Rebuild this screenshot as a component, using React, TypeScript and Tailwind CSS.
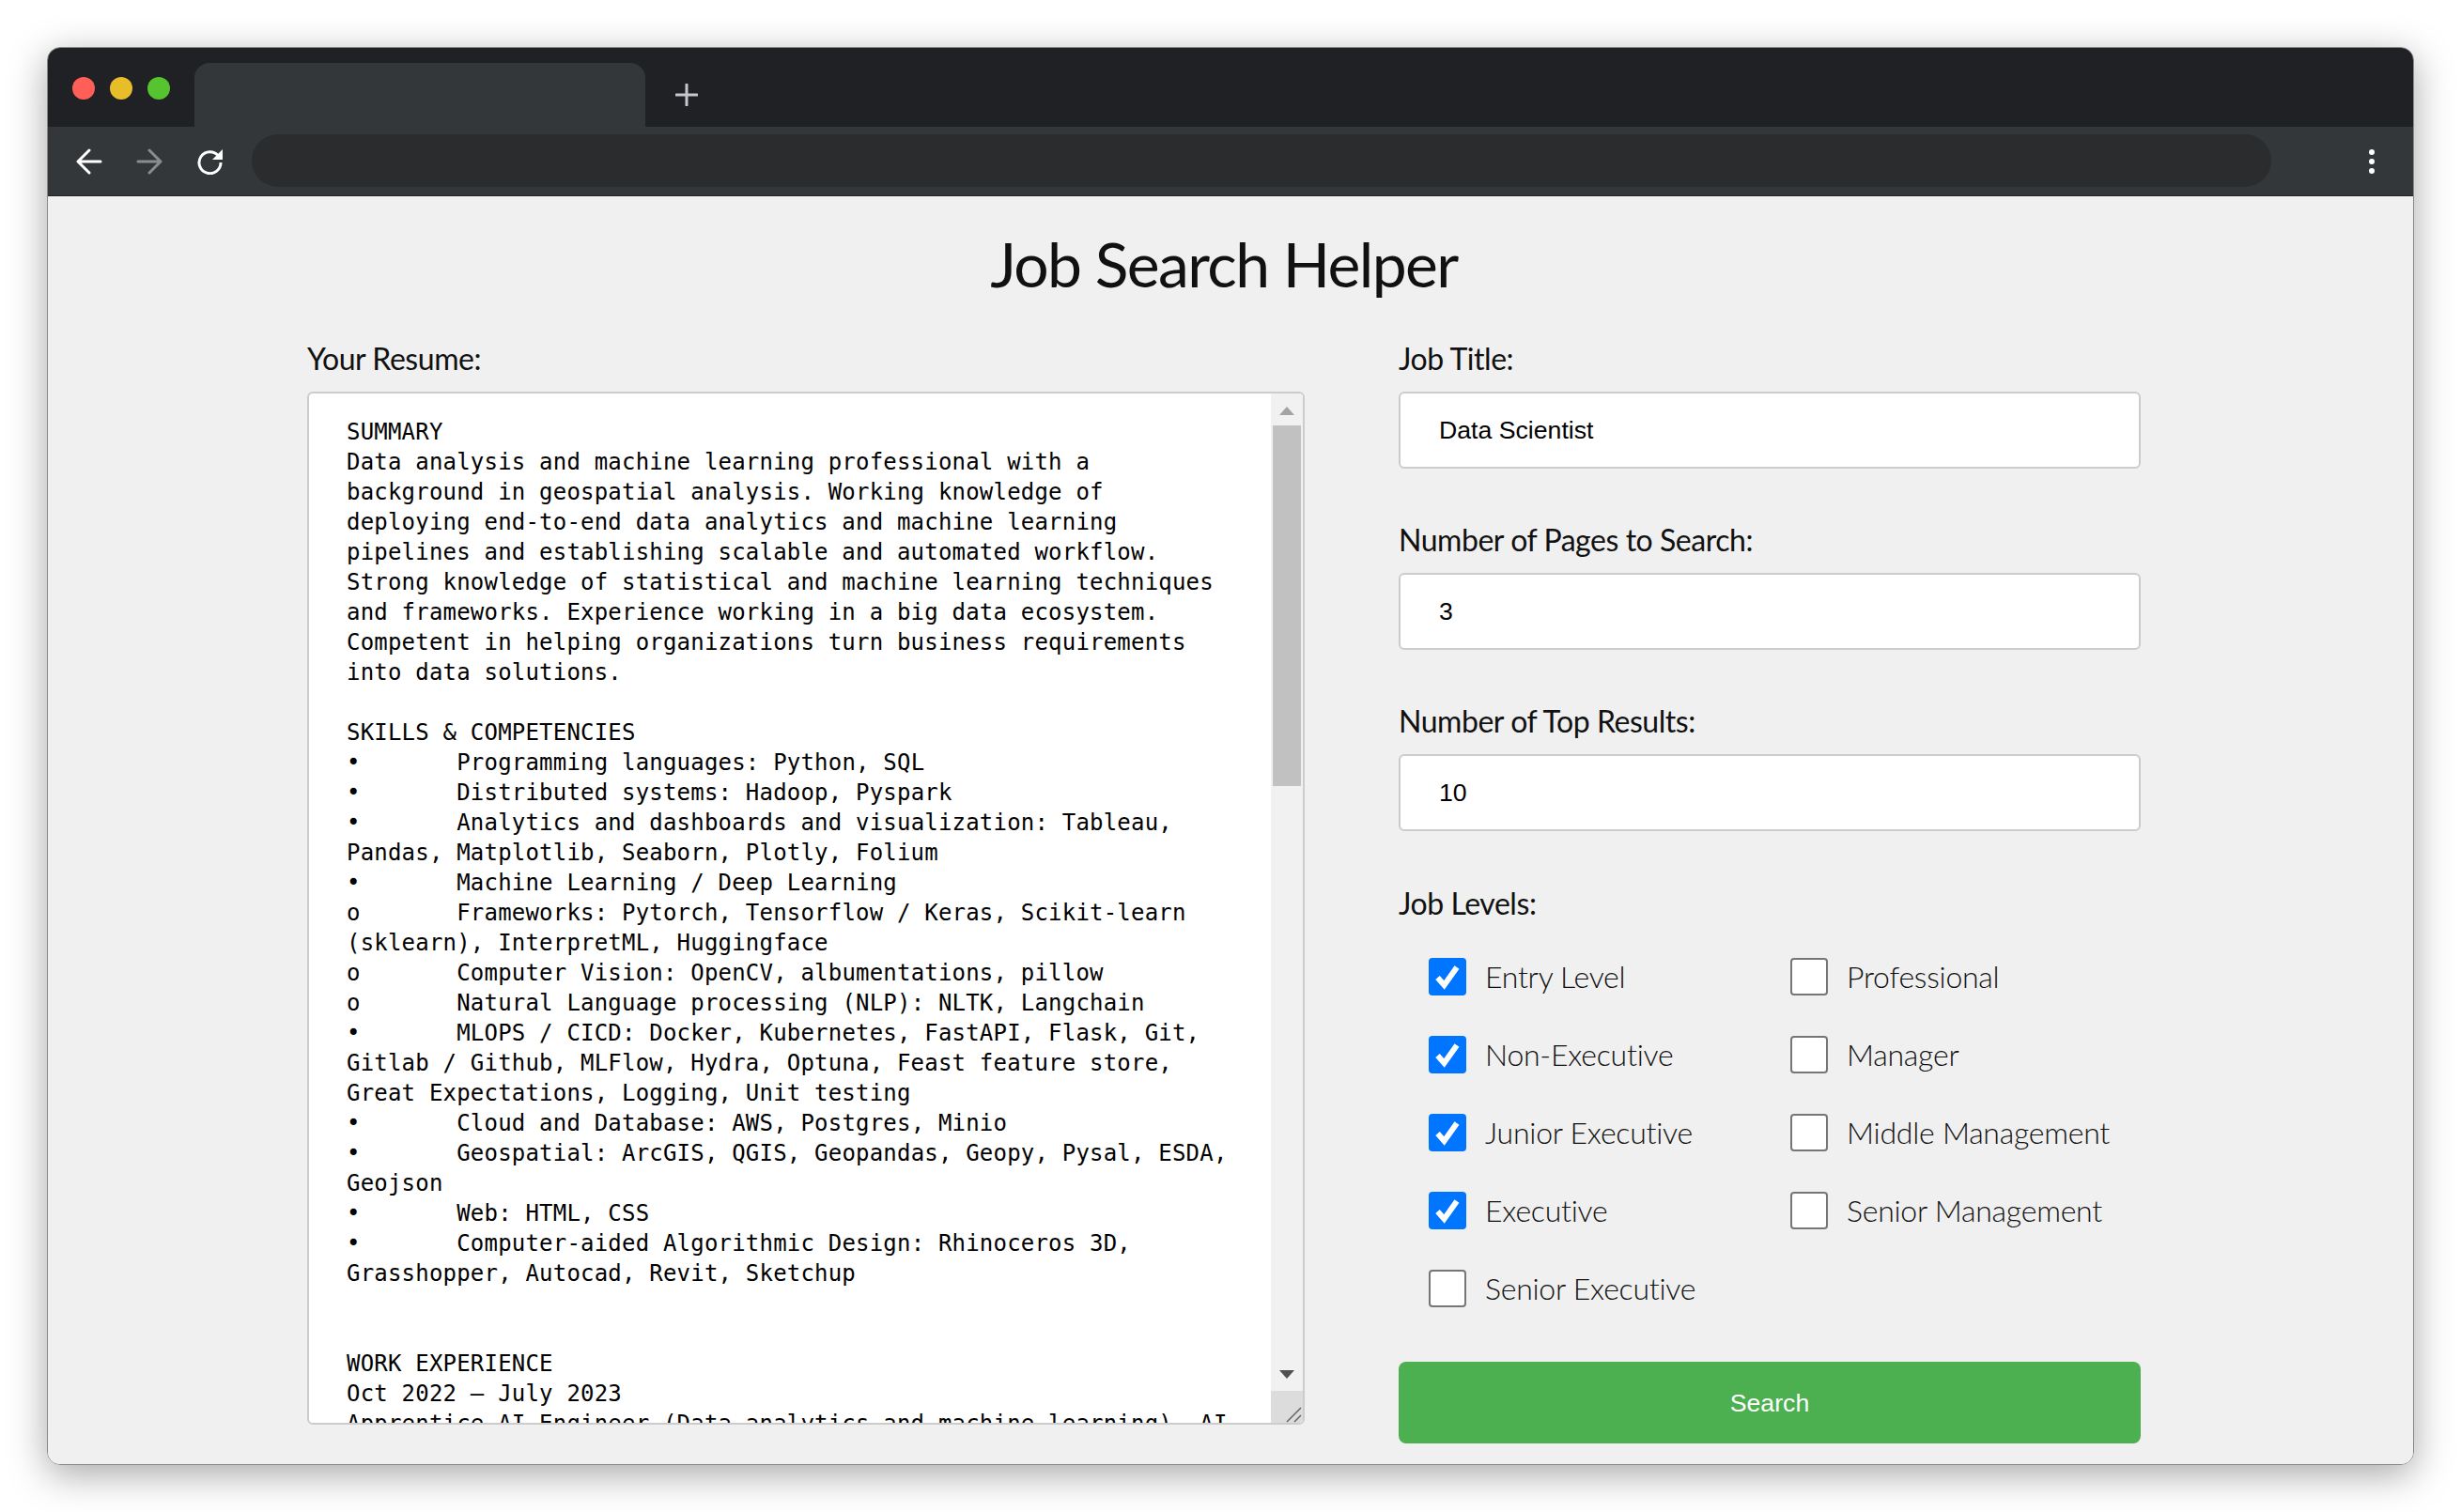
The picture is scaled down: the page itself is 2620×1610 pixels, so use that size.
const resume = `SUMMARY
Data analysis and machine learning professional with a
background in geospatial analysis. Working knowledge of
deploying end-to-end data analytics and machine learning
pipelines and establishing scalable and automated workflow.
Strong knowledge of statistical and machine learning techniques
and frameworks. Experience working in a big data ecosystem.
Competent in helping organizations turn business requirements
into data solutions.

SKILLS & COMPETENCIES
•\tProgramming languages: Python, SQL
•\tDistributed systems: Hadoop, Pyspark
•\tAnalytics and dashboards and visualization: Tableau,
Pandas, Matplotlib, Seaborn, Plotly, Folium
•\tMachine Learning / Deep Learning
o\tFrameworks: Pytorch, Tensorflow / Keras, Scikit-learn
(sklearn), InterpretML, Huggingface
o\tComputer Vision: OpenCV, albumentations, pillow
o\tNatural Language processing (NLP): NLTK, Langchain
•\tMLOPS / CICD: Docker, Kubernetes, FastAPI, Flask, Git,
Gitlab / Github, MLFlow, Hydra, Optuna, Feast feature store,
Great Expectations, Logging, Unit testing
•\tCloud and Database: AWS, Postgres, Minio
•\tGeospatial: ArcGIS, QGIS, Geopandas, Geopy, Pysal, ESDA,
Geojson
•\tWeb: HTML, CSS
•\tComputer-aided Algorithmic Design: Rhinoceros 3D,
Grasshopper, Autocad, Revit, Sketchup


WORK EXPERIENCE
Oct 2022 – July 2023
Apprentice AI Engineer (Data analytics and machine learning), AI`;

const levels: [string, boolean][] = [
  ["Entry Level", true],
  ["Professional", false],
  ["Non-Executive", true],
  ["Manager", false],
  ["Junior Executive", true],
  ["Middle Management", false],
  ["Executive", true],
  ["Senior Management", false],
  ["Senior Executive", false],
];

function Field({ label, value }: { label: string; value: string }) {
  return (
    <div className="flex flex-col">
      <div className="h-[34px] translate-y-[1px] text-[32px] leading-[34px] tracking-[-0.45px] text-[#111] font-normal">{label}</div>
      <div className="mt-[19px] flex h-[82px] items-center rounded-[6px] border-2 border-[#ccc] bg-white pl-[41px] font-['Liberation_Sans'] text-[26.67px] text-black">
        {value}
      </div>
    </div>
  );
}

function Level({ label, checked }: { label: string; checked: boolean }) {
  return (
    <div className="flex h-[40px] items-center">
      {checked ? (
        <div className="flex h-[40px] w-[40px] items-center justify-center rounded-[4px] bg-[#0075ff]">
          <svg width="34" height="34" viewBox="0 0 34 34" fill="none">
            <path d="M6.5 18 L13.5 26 L27 7" stroke="#fff" strokeWidth="6" strokeLinejoin="miter" />
          </svg>
        </div>
      ) : (
        <div className="h-[40px] w-[40px] rounded-[4px] border-2 border-[#767676] bg-white" />
      )}
      <span className="ml-[20px] whitespace-nowrap text-[32px] leading-[40px] tracking-[-0.25px] font-light text-[#111]">{label}</span>
    </div>
  );
}

export default function App() {
  return (
    <div className="h-[1610px] w-[2620px] overflow-hidden bg-white pl-[50px] pt-[50px] font-['Lato',sans-serif]">
      <div className="flex h-[1510px] w-[2520px] flex-col overflow-hidden rounded-[14px] border border-[#888] shadow-[0_10px_40px_rgba(0,0,0,0.35)]">
        <div className="relative flex h-[84px] shrink-0 items-start bg-[#202124]">
          <div className="ml-[26px] mt-[31px] flex gap-[16px]">
            <div className="h-[24px] w-[24px] rounded-full bg-[#ff5f57]" />
            <div className="h-[24px] w-[24px] rounded-full bg-[#e8bd2a]" />
            <div className="h-[24px] w-[24px] rounded-full bg-[#55c42e]" />
          </div>
          <div className="ml-[26px] mt-[16px] h-[68px] w-[480px] rounded-t-[16px] bg-[#33373a]" />
          <svg className="ml-[32px] mt-[38px]" width="24" height="24" viewBox="0 0 24 24">
            <path d="M12 1V23M1 12H23" stroke="#c4c7cb" strokeWidth="3" strokeLinecap="round" />
          </svg>
        </div>
        <div className="flex h-[74px] shrink-0 items-center border-b border-[#222] bg-[#33373a]">
          <svg className="ml-[30px]" width="28" height="28" viewBox="0 0 28 28" fill="none">
            <path d="M26 14H3M14 2L2 14L14 26" stroke="#fff" strokeWidth="3" strokeLinecap="round" strokeLinejoin="round" />
          </svg>
          <svg className="ml-[36px]" width="28" height="28" viewBox="0 0 28 28" fill="none">
            <path d="M2 14H25M14 2L26 14L14 26" stroke="#8a8d90" strokeWidth="3" strokeLinecap="round" strokeLinejoin="round" />
          </svg>
          <svg className="ml-[37px]" width="28" height="28" viewBox="0 0 28 28" fill="none">
            <path d="M22.5 8A11.5 11.5 0 1 0 25 15" stroke="#fff" strokeWidth="3" />
            <path d="M16 12H27V1Z" fill="#fff" />
          </svg>
          <div className="ml-[30px] mb-[1px] h-[56px] w-[2150px] rounded-[28px] bg-[#2a2c2e]" />
          <div className="ml-[104px] flex flex-col gap-[4px]">
            <div className="h-[6px] w-[6px] rounded-full bg-white" />
            <div className="h-[6px] w-[6px] rounded-full bg-white" />
            <div className="h-[6px] w-[6px] rounded-full bg-white" />
          </div>
        </div>
        <div className="flex-1 bg-[#f0f0f0] pl-[276px]">
          <h1 className="mt-[40px] h-[64px] w-[1952px] text-center text-[66px] leading-[64px] tracking-[-1.6px] font-normal text-[#111]">Job Search Helper</h1>
          <div className="mt-[51px] flex gap-[100px]">
            <div className="w-[1062px]">
              <div className="h-[34px] translate-y-[1px] text-[32px] leading-[34px] tracking-[-0.45px] text-[#111] font-normal">Your Resume:</div>
              <div className="relative mt-[19px] flex h-[1100px] overflow-hidden rounded-[6px] border-2 border-[#ccc] bg-white">
                <div className="flex-1 overflow-hidden whitespace-pre pl-[40px] pt-[25px] font-['DejaVu_Sans_Mono',monospace] text-[24px] leading-[32px] tracking-[0.2px] text-black [tab-size:8]">
                  {resume}
                </div>
                <div className="relative w-[34px] shrink-0 bg-[#f1f1f1]">
                  <div className="mx-auto mt-[14px] h-0 w-0 border-x-[8px] border-b-[9px] border-x-transparent border-b-[#a3a3a3]" />
                  <div className="mx-auto mt-[11px] h-[384px] w-[30px] bg-[#c1c1c1]" />
                  <div className="absolute bottom-[47px] left-[9px] h-0 w-0 border-x-[8px] border-t-[9px] border-x-transparent border-t-[#505050]" />
                  <div className="absolute bottom-0 left-0 h-[34px] w-full bg-[#dcdcdc]">
                    <svg className="absolute bottom-0 right-0" width="18" height="18" viewBox="0 0 18 18" fill="none">
                      <path d="M1 17L16 2M9 17L16 10" stroke="#666" strokeWidth="1.5" />
                    </svg>
                  </div>
                </div>
              </div>
            </div>
            <div className="w-[790px]">
              <div className="flex flex-col gap-[58px]">
                <Field label="Job Title:" value="Data Scientist" />
                <Field label="Number of Pages to Search:" value="3" />
                <Field label="Number of Top Results:" value="10" />
              </div>
              <div className="mt-[60px] h-[34px] text-[32px] leading-[34px] tracking-[-0.45px] text-[#111] font-normal">Job Levels:</div>
              <div className="ml-[32px] mt-[41px] grid grid-cols-[385px_1fr] gap-y-[43px]">
                {levels.map(([l, c]) => (
                  <Level key={l} label={l} checked={c} />
                ))}
              </div>
              <button className="mt-[58px] h-[87px] w-full rounded-[8px] bg-[#4caf50] font-['Liberation_Sans'] text-[26.67px] text-white">
                Search
              </button>
            </div>
          </div>
        </div>
      </div>
    </div>
  );
}
